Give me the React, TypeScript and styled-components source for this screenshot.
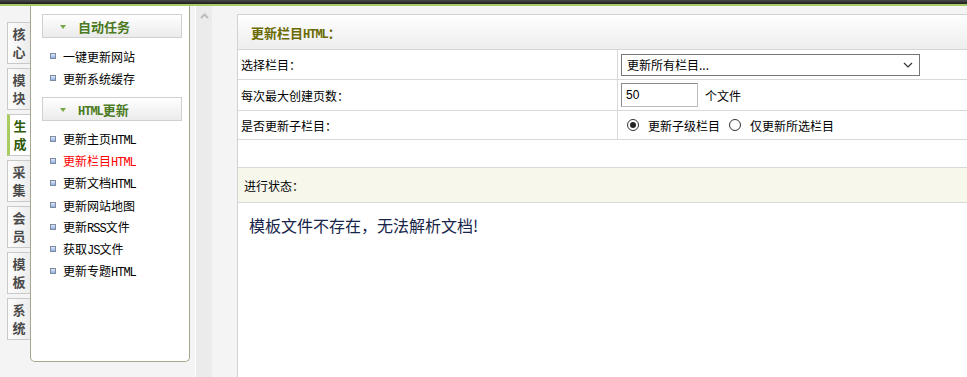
import React from 'react';
import styled, { createGlobalStyle, css } from 'styled-components';

const Global = createGlobalStyle`
  html, body { margin: 0; padding: 0; background: #f4f4f4; overflow: hidden; }
  body { font-family: "Noto Sans CJK SC", "Liberation Sans", sans-serif; font-size: 12px; color: #000; }
`;

const Page = styled.div`
  width: 967px;
  height: 377px;
  display: flex;
  flex-direction: column;
`;

const TopBar = styled.div`
  flex: none;
  height: 4px;
  background: linear-gradient(#4a4a4a, #1c1c1c);
  border-bottom: 2px solid #a9c966;
`;

const Main = styled.div`
  flex: 1;
  display: flex;
  min-height: 0;
`;

const Side = styled.div`
  flex: none;
  width: 190px;
  display: flex;
`;

const Tabs = styled.div`
  flex: none;
  width: 23px;
  padding: 16px 0 0 7px;
  display: flex;
  flex-direction: column;
  gap: 4px;
`;

const Tab = styled.div<{ $active?: boolean }>`
  height: 42px;
  box-sizing: border-box;
  border: 1px solid #c9c9c9;
  border-right: none;
  background: linear-gradient(to right, #fdfdfd, #ececec);
  display: flex;
  flex-direction: column;
  align-items: center;
  justify-content: center;
  font-weight: bold;
  font-size: 13px;
  line-height: 18px;
  color: #4a4a4a;
  ${(p) =>
    p.$active &&
    css`
      background: #fff;
      border-left: 3px solid #a9cc62;
      color: #2f5a08;
    `}
`;

const Panel = styled.div`
  flex: 1;
  height: 356px;
  box-sizing: border-box;
  background: #fff;
  border: 1px solid #a6a68e;
  border-top: none;
  border-radius: 0 0 5px 5px;
  padding: 8px 7px 0 11px;
`;

const GroupHead = styled.div`
  height: 24px;
  box-sizing: border-box;
  border: 1px solid #d0d0d0;
  background: linear-gradient(#ffffff, #ebebeb);
  display: flex;
  align-items: center;
  padding-left: 17px;
  font-weight: bold;
  font-size: 13px;
  color: #4b7a23;
`;

const Arrow = styled.span`
  width: 0;
  height: 0;
  border-left: 3px solid transparent;
  border-right: 3px solid transparent;
  border-top: 4px solid #78a845;
  margin-right: 12px;
  margin-top: 2px;
`;

const Latin = styled.span<{ $bold?: boolean }>`
  font-family: "Liberation Mono", monospace;
  font-size: 12px;
  letter-spacing: -1px;
  ${(p) => p.$bold && css`font-weight: bold;`}
`;

const List = styled.ul`
  list-style: none;
  margin: 7px 0 8px;
  padding: 0;
`;

const Item = styled.li<{ $current?: boolean }>`
  height: 22px;
  display: flex;
  align-items: center;
  padding-left: 8px;
  color: ${(p) => (p.$current ? '#ff0000' : '#000')};
`;

const Bullet = styled.span`
  width: 4px;
  height: 4px;
  border: 1px solid #7d8aa0;
  background: linear-gradient(#dfe9fb, #8fb0e6);
  margin-right: 7px;
`;

const Splitter = styled.div`
  flex: none;
  width: 47px;
  display: flex;
  padding-left: 5px;
  box-sizing: border-box;
`;

const Gap = styled.div`
  width: 1px;
  background: #ffffff;
`;

const Strip = styled.div`
  width: 16px;
  background: #ebebeb;
  display: flex;
  justify-content: center;
  padding-top: 7px;
  box-sizing: border-box;
`;

const Content = styled.div`
  flex: 1;
  margin-top: 8px;
  background: #fff;
  border-top: 1px solid #d2d2d2;
  border-left: 1px solid #d2d2d2;
  display: flex;
  flex-direction: column;
  min-width: 0;
`;

const Header = styled.div`
  height: 34px;
  flex: none;
  border-bottom: 1px solid #d6d6d6;
  background: linear-gradient(#ffffff, #ededed);
  display: flex;
  align-items: center;
  padding-left: 13px;
  font-weight: bold;
  font-size: 13px;
  color: #6a6a00;
`;

const Row = styled.div<{ $h: number }>`
  display: grid;
  grid-template-columns: 380px 1fr;
  height: ${(p) => p.$h}px;
  border-bottom: 1px solid #d9d9d9;
  flex: none;
`;

const Label = styled.div`
  border-right: 1px solid #d9d9d9;
  display: flex;
  align-items: center;
  padding-left: 3px;
`;

const Value = styled.div`
  display: flex;
  align-items: center;
  padding-left: 3px;
`;

const SelectBox = styled.div`
  width: 299px;
  height: 22px;
  box-sizing: border-box;
  border: 1px solid #767676;
  display: flex;
  align-items: center;
  justify-content: space-between;
  padding: 0 6px 0 5px;
  color: #000;
`;

const NumInput = styled.div`
  width: 77px;
  height: 24px;
  box-sizing: border-box;
  border: 1px solid #bcbcbc;
  border-top-color: #8a8a8a;
  border-left-color: #8a8a8a;
  display: flex;
  align-items: center;
  padding-left: 4px;
  font-family: "Liberation Sans", sans-serif;
  font-size: 12px;
  color: #000;
`;

const Unit = styled.span`
  margin-left: 7px;
`;

const Radio = styled.span<{ $checked?: boolean }>`
  width: 12px;
  height: 12px;
  box-sizing: border-box;
  border-radius: 50%;
  border: 1px solid #333;
  background: #fff;
  display: inline-flex;
  align-items: center;
  justify-content: center;
  margin: 0 9px 0 6px;
  &::after {
    content: '';
    width: 6px;
    height: 6px;
    border-radius: 50%;
    background: ${(p) => (p.$checked ? '#222' : 'transparent')};
  }
`;

const RadioText = styled.span`
  margin-right: 3px;
`;

const Empty = styled.div`
  height: 27px;
  flex: none;
  border-bottom: 1px solid #d9d9d9;
`;

const StatusBar = styled.div`
  height: 34px;
  flex: none;
  border-bottom: 1px solid #d9d9d9;
  background: #f7f7ec;
  display: flex;
  align-items: center;
  padding-left: 6px;
`;

const Message = styled.div`
  padding: 10px 0 0 11px;
  font-size: 16px;
  color: #17254a;
`;

const tabs: [string, string][] = [
  ['核', '心'],
  ['模', '块'],
  ['生', '成'],
  ['采', '集'],
  ['会', '员'],
  ['模', '板'],
  ['系', '统'],
];

const htmlItems: { cn: string; latin?: string; tail?: string; current?: boolean }[] = [
  { cn: '更新主页', latin: 'HTML' },
  { cn: '更新栏目', latin: 'HTML', current: true },
  { cn: '更新文档', latin: 'HTML' },
  { cn: '更新网站地图' },
  { cn: '更新', latin: 'RSS', tail: '文件' },
  { cn: '获取', latin: 'JS', tail: '文件' },
  { cn: '更新专题', latin: 'HTML' },
];

export default function App() {
  return (
    <Page>
      <Global />
      <TopBar />
      <Main>
        <Side>
          <Tabs>
            {tabs.map(([a, b], i) => (
              <Tab key={i} $active={i === 2}>
                <span>{a}</span>
                <span>{b}</span>
              </Tab>
            ))}
          </Tabs>
          <Panel>
            <GroupHead>
              <Arrow />
              <span>自动任务</span>
            </GroupHead>
            <List>
              <Item>
                <Bullet />
                <span>一键更新网站</span>
              </Item>
              <Item>
                <Bullet />
                <span>更新系统缓存</span>
              </Item>
            </List>
            <GroupHead>
              <Arrow />
              <span>
                <Latin $bold>HTML</Latin>更新
              </span>
            </GroupHead>
            <List>
              {htmlItems.map((it, i) => (
                <Item key={i} $current={it.current}>
                  <Bullet />
                  <span>
                    {it.cn}
                    {it.latin && <Latin>{it.latin}</Latin>}
                    {it.tail}
                  </span>
                </Item>
              ))}
            </List>
          </Panel>
        </Side>
        <Splitter>
          <Gap />
          <Strip>
            <svg width="9" height="6" viewBox="0 0 9 6">
              <path d="M1 5 L4.5 1.5 L8 5" fill="none" stroke="#bdbdbd" strokeWidth="2" />
            </svg>
          </Strip>
        </Splitter>
        <Content>
          <Header>
            <span>
              更新栏目<Latin $bold>HTML</Latin>：
            </span>
          </Header>
          <Row $h={29}>
            <Label>选择栏目：</Label>
            <Value>
              <SelectBox>
                <span>更新所有栏目...</span>
                <svg width="10" height="6" viewBox="0 0 10 6">
                  <path d="M1 1 L5 5 L9 1" fill="none" stroke="#333" strokeWidth="1.2" />
                </svg>
              </SelectBox>
            </Value>
          </Row>
          <Row $h={30}>
            <Label>每次最大创建页数：</Label>
            <Value>
              <NumInput>50</NumInput>
              <Unit>个文件</Unit>
            </Value>
          </Row>
          <Row $h={28}>
            <Label>是否更新子栏目：</Label>
            <Value>
              <Radio $checked />
              <RadioText>更新子级栏目</RadioText>
              <Radio />
              <RadioText>仅更新所选栏目</RadioText>
            </Value>
          </Row>
          <Empty />
          <StatusBar>进行状态：</StatusBar>
          <Message>模板文件不存在，无法解析文档!</Message>
        </Content>
      </Main>
    </Page>
  );
}
